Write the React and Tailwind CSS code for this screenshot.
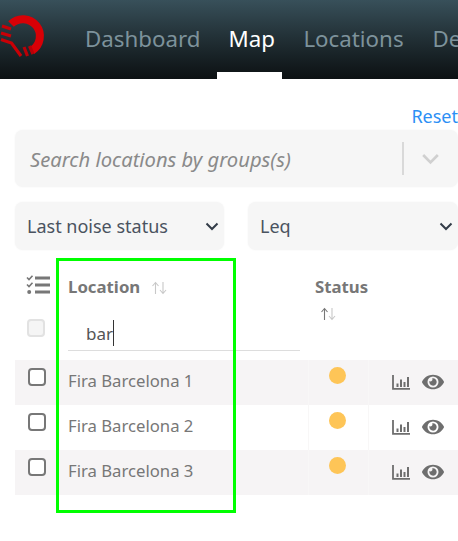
import React from 'react';
import { FaEye } from 'react-icons/fa';

const rows = [
  { name: 'Fira Barcelona 1', stripe: true },
  { name: 'Fira Barcelona 2', stripe: false },
  { name: 'Fira Barcelona 3', stripe: true }
];

const Logo = () => (
  <svg width="46" height="46" viewBox="0 0 46 46" className="shrink-0">
    <path d="M11 11 A17 17 0 1 1 32 37.5" fill="none" stroke="#d80006" strokeWidth="8" />
    <path d="M2 13 L11 16 M1 20 L11 23 M1 26.5 L11.5 30 L21 43" fill="none" stroke="#c90006" strokeWidth="3.2" />
    <path d="M24 34 L27.5 43 M29.5 33 L33 41" fill="none" stroke="#b80007" strokeWidth="3.2" />
  </svg>
);

const Chevron = ({ className }) => (
  <svg width="14" height="9" viewBox="0 0 14 9" className={className}>
    <path d="M1.5 1.5 L7 7 L12.5 1.5" fill="none" stroke="currentColor" strokeWidth="2" />
  </svg>
);

const SortArrows = ({ upClass }) => (
  <svg width="17" height="14" viewBox="0 0 17 14">
    <path d="M4.5 13 V2 M1.5 5 L4.5 1.5 L7.5 5" fill="none" stroke="currentColor" strokeWidth="1.1" className={upClass} />
    <path d="M12 1 V12 M9 9 L12 12.5 L15 9" fill="none" stroke="currentColor" strokeWidth="1.1" className="text-[#c8c8c8]" />
  </svg>
);

const ChartIcon = () => (
  <svg width="18" height="15" viewBox="0 0 18 15" className="text-[#6e6e6e]">
    <path d="M1 0 V13.8 H18" fill="none" stroke="currentColor" strokeWidth="1.8" />
    <path d="M4.5 8.5 H6.5 V12 H4.5 Z M8 4.5 H10 V12 H8 Z M11.5 7 H13.5 V12 H11.5 Z M15 2 H17 V12 H15 Z" fill="currentColor" />
  </svg>
);

const ChecklistIcon = () => (
  <svg width="24" height="20" viewBox="0 0 24 20" className="text-[#777]">
    <path d="M1 2.5 L3 4.5 L6.5 0.8 M1 9.5 L3 11.5 L6.5 7.8" fill="none" stroke="currentColor" strokeWidth="1.6" />
    <circle cx="3.2" cy="17" r="2" fill="currentColor" />
    <path d="M9 3 H24 M9 10 H24 M9 17 H24" stroke="currentColor" strokeWidth="3" />
  </svg>
);

const SelectBox = ({ label, className }) => (
  <div className={`h-12 bg-[#f6f6f6] rounded-lg shadow-[0_0_2px_rgba(0,0,0,0.05)] flex items-center justify-between pl-3 pr-[5px] text-[18px] ${className}`}>
    <span className="text-[#4a5360]">{label}</span>
    <Chevron className="text-[#333c48]" />
  </div>
);

export default function App() {
  return (
    <div className="relative w-[458px] h-[541px] overflow-hidden bg-white text-[16.7px] font-['Noto_Sans','Open_Sans',sans-serif]">
      <header className="h-[79px] flex items-stretch bg-gradient-to-b from-[#38505a] to-[#0c1113]">
        <div className="w-[85px] shrink-0 pt-[13px]">
          <Logo />
        </div>
        <nav className="flex whitespace-nowrap text-[22.3px]">
          <div className="pt-[22px] mr-[17px] text-[#7d929b]">Dashboard</div>
          <div className="w-[65px] pl-[11px] pt-[22px] mr-[21px] text-white border-b-[7px] border-white">Map</div>
          <div className="pt-[22px] mr-[29px] text-[#7d929b]">Locations</div>
          <div className="pt-[22px] text-[#7d929b]">Devices</div>
        </nav>
      </header>

      <main className="pl-[15px] w-[473px]">
        <div className="pt-[25px] pr-[15px] text-right text-[#2c8ff5] text-[18px] leading-[24px] h-[51px]">Reset</div>

        <div className="h-[57px] w-[443px] bg-[#f6f6f6] rounded-lg shadow-[0_0_2px_rgba(0,0,0,0.05)] flex items-center pl-[15px]">
          <span className="italic text-[#8a8a8a] text-[20.2px] flex-1 pt-[2px]">Search locations by groups(s)</span>
          <span className="w-[2px] h-[33px] bg-[#d9d9d9]" />
          <Chevron className="text-[#d0d0d0] ml-[17px] mr-[18px] w-[19px] h-[12px]" />
        </div>

        <div className="mt-[15px] flex gap-[24px] w-[443px]">
          <SelectBox label="Last noise status" className="w-[209px]" />
          <SelectBox label="Leq" className="w-[210px]" />
        </div>

        <div className="mt-[21px] w-[443px] grid grid-cols-[53px_240px_60px_90px] text-[#777]">
          <div className="h-[40px] pt-[4px] pl-[11px]">
            <ChecklistIcon />
          </div>
          <div className="h-[40px] flex items-start gap-[11px] pt-[4px]">
            <span className="font-bold text-[16.8px] leading-[24px]">Location</span>
            <span className="pt-[6px]"><SortArrows upClass="text-[#c8c8c8]" /></span>
          </div>
          <div className="row-span-2 -ml-[1px] pt-[4px] pl-[8px]">
            <div className="font-bold text-[16.8px] leading-[24px]">Status</div>
            <div className="mt-[8px] pl-[5px]"><SortArrows upClass="text-[#777]" /></div>
          </div>
          <div className="row-span-2" />

          <div className="h-[49px] pl-[12px] pt-[8px]">
            <div className="w-[18px] h-[18px] rounded-[4px] border-2 border-[#e2e2e2] bg-[#f5f5f5]" />
          </div>
          <div className="h-[49px] pr-[8px]">
            <div className="h-[40px] border-b border-[#dddddd] pl-[18px] pt-[4px] flex items-center text-[#555] text-[17px]">
              <span className="pt-[3px]">bar</span>
              <span className="w-px h-[26px] bg-[#333]" />
            </div>
          </div>

          {rows.map((row) => (
            <div
              key={row.name}
              className={`col-span-4 h-[45px] grid grid-cols-[53px_240px_60px_90px] ${row.stripe ? 'bg-[#f6f4f5]' : 'bg-white'}`}
            >
              <div className="pl-[13px] pt-[8px]">
                <div className="w-[18px] h-[18px] rounded-[4px] border-2 border-[#777] bg-white" />
              </div>
              <div className="pt-[9px] text-[#777] leading-[24px]">{row.name}</div>
              <div className="flex justify-start pl-[20px] pt-[7px] border-l border-[#f8f7f7]">
                <span className="w-[17px] h-[17px] rounded-full bg-[#fec557]" />
              </div>
              <div className="border-l border-[#f8f7f7]">
                <div className="flex items-center pl-[23px] pt-[12px] gap-[12px]">
                  <ChartIcon />
                  <FaEye className="w-[22px] h-[20px] text-[#6e6e6e]" />
                </div>
              </div>
            </div>
          ))}
        </div>
      </main>

      <div className="absolute left-[56px] top-[258px] w-[180px] h-[255px] border-[3px] border-[#00ff00] pointer-events-none" />
    </div>
  );
}
